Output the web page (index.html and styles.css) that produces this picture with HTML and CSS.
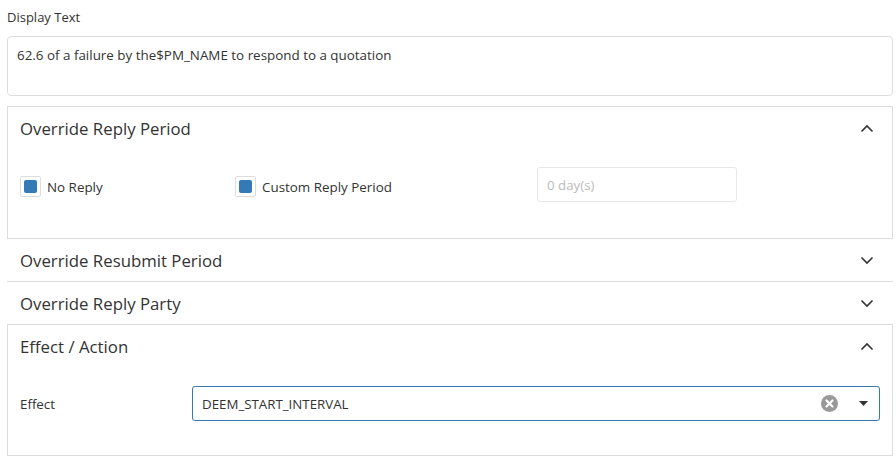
FILE: index.html
```html
<!DOCTYPE html>
<html lang="en">
<head>
  <meta charset="UTF-8">
  <meta name="viewport" content="width=device-width, initial-scale=1.0">
  <title>Clause Settings</title>
  <link rel="stylesheet" href="styles.css">
</head>
<body>
  <div class="page">
    <label class="field-label">Display Text</label>
    <div class="text-box">62.6 of a failure by the$PM_NAME to respond to a quotation</div>

    <!-- Override Reply Period -->
    <div class="panel open">
      <div class="panel-heading">
        <span class="panel-title">Override Reply Period</span>
        <svg class="chevron" width="14" height="9" viewBox="0 0 14 9"><path d="M1.5 7.5 L7 2 L12.5 7.5" fill="none" stroke="#333" stroke-width="1.6"/></svg>
      </div>
      <div class="panel-body reply-grid">
        <label class="check"><span class="check-box"><span class="check-mark"></span></span>No Reply</label>
        <label class="check"><span class="check-box"><span class="check-mark"></span></span>Custom Reply Period</label>
        <div class="days-input">0 day(s)</div>
      </div>
    </div>

    <div class="panel closed">
      <div class="panel-heading">
        <span class="panel-title">Override Resubmit Period</span>
        <svg class="chevron" width="14" height="9" viewBox="0 0 14 9"><path d="M1.5 1.5 L7 7 L12.5 1.5" fill="none" stroke="#333" stroke-width="1.6"/></svg>
      </div>
    </div>

    <div class="panel closed">
      <div class="panel-heading">
        <span class="panel-title">Override Reply Party</span>
        <svg class="chevron" width="14" height="9" viewBox="0 0 14 9"><path d="M1.5 1.5 L7 7 L12.5 1.5" fill="none" stroke="#333" stroke-width="1.6"/></svg>
      </div>
    </div>

    <!-- Effect / Action -->
    <div class="panel open">
      <div class="panel-heading">
        <span class="panel-title">Effect / Action</span>
        <svg class="chevron" width="14" height="9" viewBox="0 0 14 9"><path d="M1.5 7.5 L7 2 L12.5 7.5" fill="none" stroke="#333" stroke-width="1.6"/></svg>
      </div>
      <div class="panel-body effect-row">
        <span class="effect-label">Effect</span>
        <div class="select">
          <span class="select-value">DEEM_START_INTERVAL</span>
          <svg class="clear" width="17" height="17" viewBox="0 0 17 17">
            <circle cx="8.5" cy="8.5" r="8.5" fill="#999"/>
            <path d="M5.5 5.5 L11.5 11.5 M11.5 5.5 L5.5 11.5" stroke="#fff" stroke-width="2.2" stroke-linecap="round"/>
          </svg>
          <svg class="caret" width="9" height="5" viewBox="0 0 9 5"><path d="M0 0 H9 L4.5 5 Z" fill="#333"/></svg>
        </div>
      </div>
    </div>
  </div>
</body>
</html>
```

FILE: styles.css
```css
body {
  margin: 0;
  font-family: "Open Sans", "Noto Sans", Arial, sans-serif;
  color: #333;
  background: #fff;
}
.page {
  width: 886px;
  padding: 8px 0 0 7px;
}
.field-label {
  display: block;
  font-size: 13px;
  line-height: 18px;
  margin-bottom: 10px;
}
.text-box {
  box-sizing: border-box;
  height: 60px;
  border: 1px solid #ddd;
  border-radius: 4px;
  padding: 9px 9px;
  font-size: 13.4px;
  line-height: 18px;
  margin-bottom: 10px;
}
.panel.open {
  border: 1px solid #ddd;
}
.panel.closed {
  border-bottom: 1px solid #ddd;
}
.panel.closed + .panel.open {
  border-top: none;
}
.panel-heading {
  height: 44px;
  display: flex;
  align-items: center;
  justify-content: space-between;
  padding: 0 18px 1px 12px;
  box-sizing: border-box;
}
.panel.closed .panel-heading {
  height: 42px;
  padding: 1px 19px 0 13px;
}
.panel-title {
  font-size: 16.8px;
  color: #333;
}
.panel-body {
  padding: 16px 12px 36px;
}
.reply-grid {
  display: grid;
  grid-template-columns: 215px 302px 200px;
  align-items: start;
}
.check {
  display: flex;
  align-items: center;
  font-size: 13.4px;
  margin-top: 9px;
}
.check-box {
  width: 21px;
  height: 21px;
  box-sizing: border-box;
  border: 1px solid #ddd;
  border-radius: 2px;
  display: flex;
  align-items: center;
  justify-content: center;
  margin-right: 6px;
}
.check-mark {
  width: 13px;
  height: 13px;
  border-radius: 2px;
  background: #337ab7;
}
.days-input {
  height: 35px;
  box-sizing: border-box;
  border: 1px solid #e8e8e8;
  border-radius: 3px;
  padding: 0 9px;
  display: flex;
  align-items: center;
  font-size: 13.3px;
  color: #bbb;
}
.effect-row {
  display: flex;
  align-items: center;
  padding-top: 17px;
  padding-bottom: 34px;
}
.effect-label {
  width: 172px;
  font-size: 13.3px;
}
.select {
  flex: 1;
  height: 35px;
  box-sizing: border-box;
  border: 1px solid #337ab7;
  border-radius: 3px;
  display: flex;
  align-items: center;
  padding: 0 11px 0 9px;
  font-size: 13.3px;
}
.select-value {
  flex: 1;
}
.clear {
  margin-right: 21px;
}
```
